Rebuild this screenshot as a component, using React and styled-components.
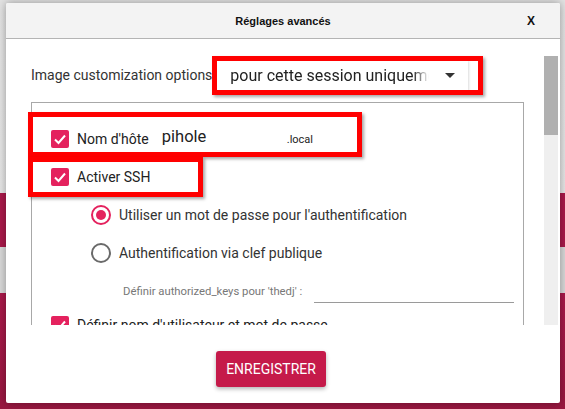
import React from "react";
import styled, { createGlobalStyle } from "styled-components";

const GlobalStyle = createGlobalStyle`
  html, body {
    margin: 0;
    padding: 0;
    width: 565px;
    height: 409px;
    overflow: hidden;
    font-family: Roboto, "Liberation Sans", sans-serif;
  }
  #root {
    height: 409px;
  }
`;

const Page = styled.div`
  position: relative;
  box-sizing: border-box;
  width: 565px;
  height: 409px;
  padding: 3px 5px 6px 6px;
  display: flex;
  background: linear-gradient(
    to bottom,
    #e2e2e2 0,
    #e6e6e6 193px,
    #a9194a 193px,
    #a9194a 247px,
    #d9d9d9 247px,
    #d9d9d9 293px,
    #a9194a 293px,
    #981840 409px
  );
`;

const Dialog = styled.div`
  flex: 1;
  display: flex;
  flex-direction: column;
  background: #ffffff;
  border-radius: 2px;
  box-shadow: 0 0 8px rgba(0, 0, 0, 0.35);
  overflow: hidden;
`;

const Header = styled.div`
  height: 35px;
  flex-shrink: 0;
  display: grid;
  grid-template-columns: 1fr auto 1fr;
  align-items: center;
  background: #f3f3f3;
  border-bottom: 1px solid #b4b4b4;
  font-family: "Liberation Sans", Arial, sans-serif;
  font-weight: bold;
  font-size: 11px;
  color: #111;
`;

const Title = styled.div`
  grid-column: 2;
`;

const Close = styled.div`
  justify-self: end;
  padding-right: 25px;
  font-size: 12px;
`;

const Body = styled.div`
  height: 286px;
  flex-shrink: 0;
  display: flex;
`;

const Content = styled.div`
  flex: 1;
  overflow: hidden;
  padding: 18px 20px 0 25px;
  color: #333;
`;

const OptionsRow = styled.div`
  display: flex;
  align-items: center;
  height: 36px;
  font-size: 14px;
  white-space: nowrap;
`;

const Select = styled.div`
  margin-left: 5px;
  width: 251px;
  height: 31px;
  flex-shrink: 0;
  box-sizing: border-box;
  display: flex;
  align-items: center;
  padding: 0 0 0 13px;
  background: #fff;
  box-shadow: 0 1px 3px rgba(0, 0, 0, 0.25);
  font-size: 16px;
  color: #222;
`;

const SelectText = styled.span`
  white-space: nowrap;
  overflow: hidden;
  width: 199px;
  -webkit-mask-image: linear-gradient(to right, #000 92%, transparent);
  mask-image: linear-gradient(to right, #000 92%, transparent);
`;

const Caret = styled.span`
  width: 0;
  height: 0;
  margin-left: 16px;
  border-left: 5px solid transparent;
  border-right: 5px solid transparent;
  border-top: 5px solid #333;
`;

const Fieldset = styled.div`
  margin-top: 9px;
  width: 493px;
  height: 260px;
  box-sizing: border-box;
  border: 1px solid #a8a8a8;
  border-bottom: none;
  padding: 17px 0 0 19px;
`;

const CheckRow = styled.div`
  display: flex;
  align-items: center;
  height: 38px;
  font-size: 14px;
  color: #222;
  white-space: nowrap;
`;

const Box = styled.span`
  width: 18px;
  height: 18px;
  border-radius: 2px;
  background: #e4225e;
  display: flex;
  align-items: center;
  justify-content: center;
  margin-right: 8px;
  flex-shrink: 0;
`;

const HostValue = styled.span`
  margin-left: 13px;
  margin-top: -6px;
  width: 125px;
  font-size: 16.5px;
  color: #222;
`;

const Suffix = styled.span`
  font-size: 11px;
  color: #222;
`;

const RadioRow = styled.div`
  display: flex;
  align-items: center;
  height: 38px;
  padding-left: 40px;
  font-size: 14px;
  color: #333;
`;

const Radio = styled.span`
  width: 20px;
  height: 20px;
  box-sizing: border-box;
  border-radius: 50%;
  border: 2px solid ${(p) => (p.checked ? "#e4225e" : "#6a6a6a")};
  display: flex;
  align-items: center;
  justify-content: center;
  margin-right: 8px;
  flex-shrink: 0;
  &::after {
    content: "";
    width: 10px;
    height: 10px;
    border-radius: 50%;
    background: ${(p) => (p.checked ? "#e4225e" : "transparent")};
  }
`;

const KeysRow = styled.div`
  display: flex;
  align-items: flex-end;
  height: 34px;
  padding-left: 72px;
  font-size: 11.3px;
  color: #777;
`;

const KeysLabel = styled.span`
  padding-bottom: 8px;
`;

const KeysInput = styled.span`
  margin-left: 12px;
  width: 200px;
  border-bottom: 1px solid #9a9a9a;
  margin-bottom: 3px;
`;

const LastRow = styled(CheckRow)`
  margin-top: 7px;
  height: 24px;
`;

const ScrollTrack = styled.div`
  width: 14px;
  margin: 17px 2px 0 0;
  background: #efefef;
  display: flex;
  flex-direction: column;
`;

const ScrollThumb = styled.div`
  height: 79px;
  background: #b0b0b0;
`;

const Footer = styled.div`
  flex: 1;
  display: flex;
  justify-content: center;
  align-items: flex-start;
  padding: 26px 24px 0 0;
`;

const SaveButton = styled.button`
  width: 110px;
  height: 36px;
  border: none;
  border-radius: 3px;
  background: #c51a4a;
  color: #fff;
  font-family: Roboto, sans-serif;
  font-size: 14px;
  box-shadow: 0 2px 4px rgba(0, 0, 0, 0.3);
`;

/* red annotation frames drawn over the screenshot */
const Highlight = styled.div`
  position: absolute;
  box-sizing: border-box;
  border: 5px solid #ff0000;
  box-shadow: 2px 2px 3px rgba(0, 0, 0, 0.35);
  left: ${(p) => p.x}px;
  top: ${(p) => p.y}px;
  width: ${(p) => p.w}px;
  height: ${(p) => p.h}px;
`;

const Check = () => (
  <svg width="14" height="14" viewBox="0 0 14 14">
    <polyline
      points="2,7.5 5.5,11 12,3.5"
      fill="none"
      stroke="#fff"
      strokeWidth="2"
    />
  </svg>
);

export default function App() {
  return (
    <>
      <GlobalStyle />
      <Page>
        <Dialog>
          <Header>
            <Title>Réglages avancés</Title>
            <Close>X</Close>
          </Header>
          <Body>
            <Content>
              <OptionsRow>
                Image customization options
                <Select>
                  <SelectText>pour cette session uniquement</SelectText>
                  <Caret />
                </Select>
              </OptionsRow>
              <Fieldset>
                <CheckRow>
                  <Box>
                    <Check />
                  </Box>
                  Nom d'hôte
                  <HostValue>pihole</HostValue>
                  <Suffix>.local</Suffix>
                </CheckRow>
                <CheckRow>
                  <Box>
                    <Check />
                  </Box>
                  Activer SSH
                </CheckRow>
                <RadioRow>
                  <Radio checked />
                  Utiliser un mot de passe pour l'authentification
                </RadioRow>
                <RadioRow>
                  <Radio />
                  Authentification via clef publique
                </RadioRow>
                <KeysRow>
                  <KeysLabel>Définir authorized_keys pour 'thedj' :</KeysLabel>
                  <KeysInput />
                </KeysRow>
                <LastRow>
                  <Box>
                    <Check />
                  </Box>
                  Définir nom d'utilisateur et mot de passe
                </LastRow>
              </Fieldset>
            </Content>
            <ScrollTrack>
              <ScrollThumb />
            </ScrollTrack>
          </Body>
          <Footer>
            <SaveButton>ENREGISTRER</SaveButton>
          </Footer>
        </Dialog>
        <Highlight x={212} y={56} w={271} h={39} />
        <Highlight x={28} y={112} w={334} h={45} />
        <Highlight x={28} y={157} w={175} h={40} />
      </Page>
    </>
  );
}
